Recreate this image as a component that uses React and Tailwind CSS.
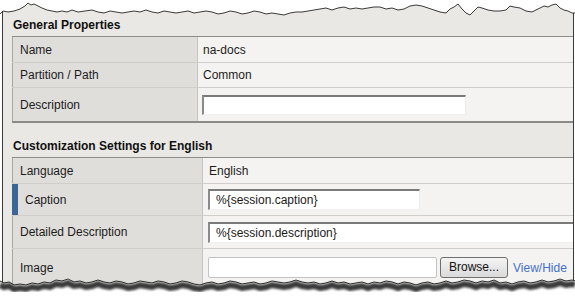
import React from 'react';

const topEdge = [
  [0, 14], [3, 11], [8, 12], [14, 11], [20, 9], [25, 6], [28, 3], [31, 5], [34, 4], [38, 6], [42, 8], [47, 10],
  [52, 11], [57, 12], [62, 11], [67, 12], [72, 10], [78, 12], [85, 11], [92, 10], [98, 12], [104, 13], [110, 11],
  [116, 12], [122, 13], [128, 12], [134, 11], [140, 12], [146, 10], [152, 12], [158, 13], [164, 11], [170, 12],
  [176, 13], [182, 12], [188, 11], [194, 13], [200, 12], [206, 11], [212, 12], [218, 14], [224, 13], [230, 11],
  [236, 12], [242, 14], [248, 13], [254, 11], [260, 12], [266, 14], [272, 13], [278, 14], [284, 15], [290, 13],
  [296, 12], [302, 12], [308, 11], [314, 10], [320, 9], [326, 8], [332, 10], [338, 8], [344, 7], [350, 9],
  [356, 8], [362, 9], [368, 8], [374, 7], [380, 7], [386, 9], [392, 8], [398, 10], [404, 9], [410, 6], [416, 5],
  [422, 6], [428, 8], [434, 10], [440, 12], [446, 13], [450, 9], [454, 7], [458, 4], [462, 9], [466, 13],
  [470, 15], [474, 11], [478, 7], [482, 8], [488, 10], [494, 11], [500, 11], [506, 10], [510, 6], [514, 7],
  [520, 8], [526, 11], [532, 12], [538, 9], [544, 6], [548, 7], [552, 5], [556, 4], [560, 8], [564, 10],
  [568, 11], [572, 13], [575, 13]
];

const bottomEdge = [
  [0, 281], [4, 283], [9, 282], [14, 285], [20, 284], [26, 285], [32, 283], [38, 284], [44, 282], [50, 283],
  [56, 280], [62, 281], [68, 279], [74, 282], [80, 281], [86, 283], [92, 282], [98, 280], [104, 282], [110, 283],
  [116, 281], [122, 282], [128, 284], [134, 283], [140, 281], [146, 282], [152, 283], [158, 281], [164, 282],
  [170, 284], [176, 283], [182, 281], [188, 282], [194, 284], [200, 285], [206, 283], [212, 282], [218, 284],
  [224, 283], [230, 281], [236, 282], [242, 284], [248, 283], [254, 282], [260, 284], [266, 283], [272, 281],
  [278, 282], [284, 283], [290, 282], [296, 280], [302, 282], [308, 283], [314, 282], [320, 284], [326, 283],
  [332, 281], [338, 283], [344, 282], [350, 284], [356, 283], [362, 282], [368, 284], [374, 282], [380, 283],
  [386, 281], [392, 282], [398, 284], [404, 282], [410, 283], [416, 285], [422, 283], [428, 282], [434, 284],
  [440, 283], [446, 281], [452, 283], [458, 282], [464, 280], [470, 281], [476, 283], [482, 281], [488, 282],
  [494, 280], [500, 283], [506, 282], [512, 284], [518, 282], [524, 281], [530, 283], [536, 282], [542, 280],
  [548, 282], [554, 281], [560, 279], [566, 281], [572, 280], [575, 281]
];

const pts = (list) => list.map(([x, y]) => `${x},${y}`).join(' ');

function TornEdges() {
  return (
    <svg className="pointer-events-none absolute left-0 top-0" width="575" height="296" viewBox="0 0 575 296">
      <defs>
        <filter id="blur" x="-5%" y="-50%" width="110%" height="200%">
          <feGaussianBlur stdDeviation="1.3" />
        </filter>
      </defs>
      <polygon points={`0,0 575,0 ${pts([...topEdge].reverse())}`} fill="#ffffff" />
      <polyline points={pts(topEdge)} fill="none" stroke="#3a3a3a" strokeWidth="1" />
      <polygon points={`${pts(bottomEdge)} 575,296 0,296`} fill="#ffffff" />
      <polyline
        points={pts(bottomEdge.map(([x, y]) => [x, y + 4]))}
        fill="none"
        stroke="#3a3a3a"
        strokeWidth="6"
        filter="url(#blur)"
      />
      <polyline points={pts(bottomEdge)} fill="none" stroke="#2e2e2e" strokeWidth="1" />
    </svg>
  );
}

function Row({ label, height, labelWidth, mark, last, children }) {
  return (
    <div className={`flex ${height} ${last ? '' : 'border-b border-[#cfceca]'}`}>
      <div
        className={`flex shrink-0 items-center bg-[#dfdedb] border-r border-[#c6c5c1] ${labelWidth} ${
          mark ? 'border-l-[6px] border-l-[#3b6696] pl-[7px]' : 'border-l border-l-[#a8a7a3] pl-[7px]'
        }`}
      >
        {label}
      </div>
      <div className="flex flex-1 items-center bg-[#f4f3f1] pl-[5px]">{children}</div>
    </div>
  );
}

function TextField({ width, value }) {
  return (
    <div
      className={`flex h-[21px] ${width} shrink-0 items-center border-t-2 border-l-2 border-t-[#7a7a7a] border-l-[#8a8a8a] border-r border-b border-r-[#ececec] border-b-[#f0efed] bg-white pl-[6px] text-[#1a1a1a]`}
    >
      {value}
    </div>
  );
}

export default function App() {
  return (
    <div className="relative h-[296px] w-[575px] overflow-hidden bg-white font-['Liberation_Sans',Arial,sans-serif] text-[12px] text-[#1c1c1c]">
      <div className="ml-[2px] h-[296px] w-[572px] overflow-hidden border-l border-r border-[#3a3a3a] bg-[#e9e8e4] pt-[18px] pl-[9px]">
        <h2 className="mb-[4px] h-[14px] pl-[1px] text-[12px] font-bold leading-[14px] text-[#111]">General Properties</h2>
        <div className="w-[600px] border-t border-t-[#8e8d89] border-b-2 border-b-[#8c8b87]">
          <Row label="Name" height="h-[26px]" labelWidth="w-[186px]">
            <span>na-docs</span>
          </Row>
          <Row label="Partition / Path" height="h-[25px]" labelWidth="w-[186px]">
            <span>Common</span>
          </Row>
          <Row label="Description" height="h-[33px]" labelWidth="w-[186px]" last>
            <div className="-ml-[1px] h-[20px] w-[264px] border-t-2 border-l-2 border-t-[#7a7a7a] border-l-[#8a8a8a] border-r border-b border-r-[#ececec] border-b-[#f0efed] bg-white" />
          </Row>
        </div>

        <h2 className="mt-[16px] mb-[4px] h-[14px] pl-[1px] text-[12px] font-bold leading-[14px] text-[#111]">
          Customization Settings for English
        </h2>
        <div className="w-[620px] border-t border-t-[#8e8d89]">
          <Row label="Language" height="h-[26px]" labelWidth="w-[191px]">
            <span className="pl-[1px]">English</span>
          </Row>
          <Row label="Caption" height="h-[32px]" labelWidth="w-[191px]" mark>
            <TextField width="w-[212px]" value="%{session.caption}" />
          </Row>
          <Row label="Detailed Description" height="h-[33px]" labelWidth="w-[191px]">
            <TextField width="w-[400px]" value="%{session.description}" />
          </Row>
          <Row label="Image" height="h-[37px]" labelWidth="w-[191px]" last>
            <div className="flex items-center">
              <div className="h-[21px] w-[229px] rounded-[2px] border border-[#c3c3c3] bg-white" />
              <button
                type="button"
                className="ml-[3px] h-[21px] w-[68px] rounded-[3px] border border-[#707070] bg-gradient-to-b from-[#f4f4f4] to-[#dadada] text-[12px] leading-[19px] text-[#111]"
              >
                Browse...
              </button>
              <span className="ml-[5px] text-[#4470cc]">View/Hide</span>
            </div>
          </Row>
        </div>
      </div>
      <TornEdges />
    </div>
  );
}
